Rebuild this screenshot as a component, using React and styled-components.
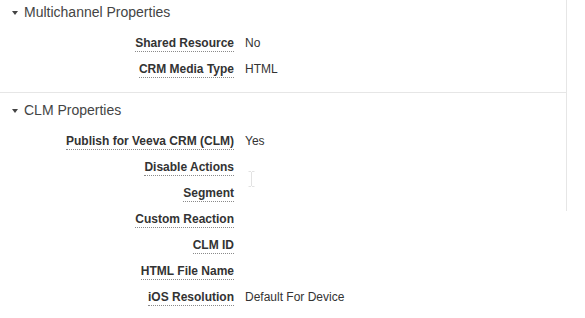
import React from "react";
import styled, { createGlobalStyle } from "styled-components";

const Global = createGlobalStyle`
  html, body { margin: 0; padding: 0; background: #fff; }
  body { font-family: "Liberation Sans", Arial, sans-serif; color: #333; }
`;

const Layout = styled.div`
  display: flex;
  align-items: flex-start;
  position: relative;
`;

const Content = styled.div`
  width: 566px;
`;

const Rail = styled.div`
  width: 1px;
  height: 211px;
  background: #e6e6e6;
`;

const Section = styled.section`
  padding: ${(p) => p.$pt}px 0 ${(p) => p.$pb}px;
  border-bottom: ${(p) => (p.$divider ? "1px solid #e6e6e6" : "none")};
`;

const Header = styled.div`
  display: flex;
  align-items: center;
  height: 24px;
  padding-left: 12px;
  gap: 6px;
  font-size: 14px;
  color: #444;
  margin-bottom: ${(p) => p.$mb}px;
`;

const Caret = styled.span`
  width: 0;
  height: 0;
  border-left: 3.5px solid transparent;
  border-right: 3.5px solid transparent;
  border-top: 4px solid #444;
  margin-top: 1px;
`;

const Grid = styled.div`
  display: grid;
  grid-template-columns: 234px 1fr;
  grid-auto-rows: 26px;
  column-gap: 11px;
  align-items: center;
`;

const Label = styled.div`
  justify-self: end;
  font-size: 12px;
  font-weight: bold;
  color: #333;
  line-height: 14px;
  border-bottom: 1px dotted #8a8a8a;
  padding-bottom: 1px;
  margin-top: 2px;
`;

const Value = styled.div`
  font-size: 12px;
  color: #333;
  line-height: 14px;
`;

const Cursor = styled.svg`
  position: absolute;
  left: 248px;
  top: 171px;
`;

const sections = [
  {
    title: "Multichannel Properties",
    pt: 0,
    pb: 10,
    mb: 6,
    divider: true,
    rows: [
      ["Shared Resource", "No"],
      ["CRM Media Type", "HTML"],
    ],
  },
  {
    title: "CLM Properties",
    pt: 5,
    pb: 0,
    mb: 6,
    divider: false,
    rows: [
      ["Publish for Veeva CRM (CLM)", "Yes"],
      ["Disable Actions", ""],
      ["Segment", ""],
      ["Custom Reaction", ""],
      ["CLM ID", ""],
      ["HTML File Name", ""],
      ["iOS Resolution", "Default For Device"],
    ],
  },
];

export default function App() {
  return (
    <>
      <Global />
      <Layout>
        <Content>
          {sections.map((s) => (
            <Section key={s.title} $pt={s.pt} $pb={s.pb} $divider={s.divider}>
              <Header $mb={s.mb}>
                <Caret />
                <span>{s.title}</span>
              </Header>
              <Grid>
                {s.rows.map(([l, v]) => (
                  <React.Fragment key={l}>
                    <Label>{l}</Label>
                    <Value>{v}</Value>
                  </React.Fragment>
                ))}
              </Grid>
            </Section>
          ))}
        </Content>
        <Rail />
        <Cursor width="7" height="16" viewBox="0 0 7 16">
          <path d="M0.5 0.5h2.5M4 0.5h2.5M3.5 1v14M0.5 15.5h2.5M4 15.5h2.5" stroke="#e2e2e2" strokeWidth="1" fill="none" />
        </Cursor>
      </Layout>
    </>
  );
}
